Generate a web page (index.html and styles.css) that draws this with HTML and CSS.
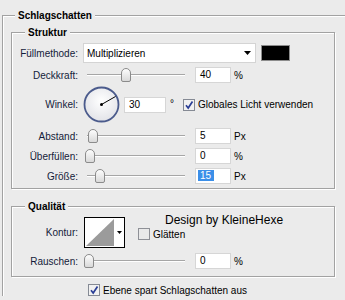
FILE: index.html
```html
<!DOCTYPE html>
<html>

<head lang="de">
    <meta charset="UTF-8">
    <title>Schlagschatten</title>
    <link rel="stylesheet" href="styles.css">
</head>

<body>
    <fieldset class="group outer">
        <legend>Schlagschatten</legend>

        <fieldset class="group sub struktur">
            <legend>Struktur</legend>

            <div class="row r-sel">
                <span class="lab">Füllmethode:</span>
                <div class="select">
                    <span>Multiplizieren</span>
                    <svg width="7" height="4" viewBox="0 0 7 4"><polygon points="0,0 7,0 3.5,4" fill="#000"/></svg>
                </div>
                <div class="swatch"></div>
            </div>

            <div class="row r-sm">
                <span class="lab">Deckkraft:</span>
                <div class="slider"><span class="thumb" style="left:38px"></span></div>
                <span class="field">40</span>
                <span class="unit">%</span>
            </div>

            <div class="row r-ang">
                <span class="lab">Winkel:</span>
                <svg class="dial" width="37" height="37" viewBox="0 0 37 37">
                    <defs>
                        <radialGradient id="dialbg" cx="50%" cy="40%" r="60%">
                            <stop offset="0" stop-color="#ffffff"/>
                            <stop offset="1" stop-color="#e2e3e8"/>
                        </radialGradient>
                    </defs>
                    <circle cx="18.5" cy="18.5" r="17" fill="url(#dialbg)" stroke="#4b5b8c" stroke-width="1.8"/>
                    <line x1="18.5" y1="18.5" x2="32.5" y2="10.5" stroke="#000" stroke-width="1"/>
                    <circle cx="18.5" cy="18.5" r="1.5" fill="#000"/>
                </svg>
                <span class="field wide">30</span>
                <span class="unit deg">°</span>
                <svg class="cb cb-light" width="12" height="12" viewBox="0 0 12 12">
                    <rect x="0.5" y="0.5" width="11" height="11" fill="#f1f1f1" stroke="#858a94"/>
                    <path d="M3 6.2 L5.2 9 L9.5 2.5" fill="none" stroke="#2b3f96" stroke-width="1.7"/>
                </svg>
                <span class="cb-text">Globales Licht verwenden</span>
            </div>

            <div class="row r-sm r-after">
                <span class="lab">Abstand:</span>
                <div class="slider"><span class="thumb" style="left:5px"></span></div>
                <span class="field">5</span>
                <span class="unit">Px</span>
            </div>

            <div class="row r-sm">
                <span class="lab">Überfüllen:</span>
                <div class="slider"><span class="thumb" style="left:2px"></span></div>
                <span class="field">0</span>
                <span class="unit">%</span>
            </div>

            <div class="row r-sm">
                <span class="lab">Größe:</span>
                <div class="slider"><span class="thumb" style="left:12px"></span></div>
                <span class="field"><span class="sel">15</span></span>
                <span class="unit">Px</span>
            </div>
        </fieldset>

        <fieldset class="group sub qualitaet">
            <legend>Qualität</legend>

            <div class="row r-kontur">
                <span class="lab lab-kontur">Kontur:</span>
                <svg class="kontur" width="41" height="31" viewBox="0 0 41 31">
                    <rect x="0.5" y="0.5" width="40" height="30" fill="#fff" stroke="#000"/>
                    <polygon points="2,29 30,2 30,29" fill="#9b9b9b"/>
                    <polygon points="33,14 38,14 35.5,17" fill="#000"/>
                </svg>
                <div class="kontur-side">
                    <div class="design">Design by KleineHexe</div>
                    <div class="row">
                        <svg class="cb" width="12" height="12" viewBox="0 0 12 12">
                            <rect x="0.5" y="0.5" width="11" height="11" fill="#e9e9e9" stroke="#8e9096"/>
                        </svg>
                        <span class="cb-text">Glätten</span>
                    </div>
                </div>
            </div>

            <div class="row r-sm r-rauschen">
                <span class="lab">Rauschen:</span>
                <div class="slider"><span class="thumb" style="left:1px"></span></div>
                <span class="field">0</span>
                <span class="unit">%</span>
            </div>
        </fieldset>

        <div class="row bottom">
            <svg class="cb" width="12" height="12" viewBox="0 0 12 12">
                <rect x="0.5" y="0.5" width="11" height="11" fill="#f1f1f1" stroke="#858a94"/>
                <path d="M3 6.2 L5.2 9 L9.5 2.5" fill="none" stroke="#2b3f96" stroke-width="1.7"/>
            </svg>
            <span class="cb-text">Ebene spart Schlagschatten aus</span>
        </div>
    </fieldset>
</body>

</html>
```

FILE: styles.css
```css
html,
body {
    margin: 0;
    width: 345px;
    height: 300px;
    overflow: hidden;
}

body {
    background: #ebebeb;
    font: 10px "Liberation Sans", Arial, sans-serif;
    color: #141b3a;
}

.group {
    margin: 0;
    padding: 0;
    border: 1px solid #a2a2a2;
    box-shadow: inset 1px 1px 0 #fff, 1px 1px 0 #fff;
    min-width: 0;
    box-sizing: border-box;
}

.group > legend {
    font-weight: bold;
    color: #000;
    line-height: 13px;
    padding: 0 3px;
    background: #ebebeb;
}

/* the outer frame runs off the right and bottom edge */
.outer {
    margin: 9px 0 0 2px;
    padding-left: 8px;
    width: 343px;
    border-right: none;
    border-bottom: none;
    box-shadow: inset 1px 1px 0 #fff;
}

.outer > legend {
    margin-left: 4px;
}

.sub {
    width: 324px;
}

.sub > legend {
    margin-left: 13px;
}

.struktur {
    margin-top: 4px;
    padding-bottom: 4px;
}

.qualitaet {
    margin-top: 11px;
    padding-bottom: 7px;
}

.row {
    display: flex;
    align-items: center;
}

.lab {
    width: 66px;
    flex: none;
    text-align: right;
    margin-right: 5px;
}

.r-sel {
    margin-top: 4px;
    height: 20px;
}

.r-sm {
    margin-top: 4px;
    height: 16px;
}

.r-ang {
    margin-top: 3px;
    height: 37px;
}

.r-after {
    margin-top: 5px;
}

/* Füllmethode */
.select {
    width: 173px;
    height: 20px;
    box-sizing: border-box;
    background: #fff;
    border: 1px solid #d4d4d4;
    padding: 0 4px 0 3px;
    display: flex;
    align-items: center;
    justify-content: space-between;
    color: #000;
}

.swatch {
    width: 29px;
    height: 16px;
    box-sizing: border-box;
    background: #000;
    border: 1px solid #8c8c8c;
    margin-left: 5px;
}

/* slider */
.slider {
    position: relative;
    width: 102px;
    height: 16px;
    flex: none;
}

.slider::before {
    content: "";
    position: absolute;
    left: 4px;
    right: 0;
    top: 7px;
    height: 1px;
    background: #a6a6a6;
    box-shadow: 0 1px 0 #fff;
}

.thumb {
    position: absolute;
    top: 1px;
    width: 8px;
    height: 12px;
    border: 1px solid #8b8b8b;
    border-radius: 5px 5px 2px 2px;
    background: linear-gradient(#fdfdfd, #d9d9d9);
}

.field {
    width: 36px;
    height: 16px;
    box-sizing: border-box;
    margin-left: 10px;
    padding-left: 4px;
    background: #fff;
    border: 1px solid #d6d6d6;
    line-height: 14px;
    color: #000;
}

.field.wide {
    width: 42px;
    margin-left: 4px;
}

.sel {
    background: #3b8fe8;
    color: #fff;
    margin-left: -2px;
    padding: 0 3px 0 2px;
}

.unit {
    margin-left: 3px;
    color: #000;
}

.unit.deg {
    margin-left: 4px;
    align-self: flex-start;
    margin-top: 12px;
}

.cb {
    flex: none;
}

.cb-light {
    margin-left: 9px;
}

.cb-text {
    margin-left: 3px;
    color: #000;
}

/* Qualität */
.r-kontur {
    margin-top: 4px;
    align-items: flex-start;
}

.lab-kontur {
    line-height: 31px;
    margin-right: 6px;
}

.kontur {
    flex: none;
}

.kontur-side {
    margin-top: -4px;
    margin-left: 13px;
}

.design {
    font-size: 12px;
    line-height: 14px;
    color: #000;
    padding-left: 27px;
    margin-bottom: 1px;
}

.r-rauschen {
    margin-top: 5px;
}

.bottom {
    margin-top: 7px;
    padding-left: 77px;
}
```
